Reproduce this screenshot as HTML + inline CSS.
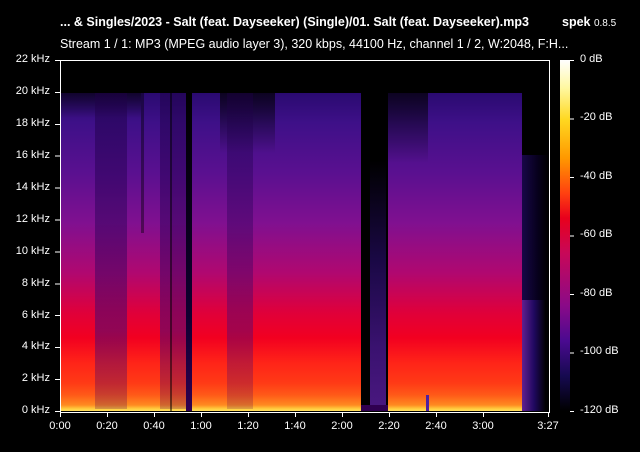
<!DOCTYPE html>
<html><head><meta charset="utf-8"><style>
body{margin:0;background:#000;width:640px;height:452px;overflow:hidden;position:relative;font-family:"Liberation Sans",sans-serif;color:#fff}
.a{position:absolute}
.t{font-size:11px;white-space:nowrap}
.yl{right:590px;font-size:11px;text-align:right}
.xl{font-size:11px;top:420px;transform:translateX(-50%)}
.spec{background:linear-gradient(to bottom,#2a0a70 0px,#3e1088 30px,#5a1090 80px,#801090 130px,#b00870 180px,#e0003a 220px,#f20020 245px,#ff2418 270px,#ff3a16 290px,#ff5a18 302px,#ff8a20 312px,#ffd040 316px,#ffe060 318px)}
.dk{background:linear-gradient(to bottom,rgba(30,0,70,.5),rgba(40,0,90,.45) 50%,rgba(70,10,120,.55) 75%,rgba(80,0,80,.25))}
</style></head><body>
<div class="a" style="left:60px;top:15px;font-size:12.5px;font-weight:bold">... &amp; Singles/2023 - Salt (feat. Dayseeker) (Single)/01. Salt (feat. Dayseeker).mp3</div>
<div class="a" style="left:562px;top:15px;font-size:12.5px;font-weight:bold">spek <span style="font-weight:normal;font-size:10px">0.8.5</span></div>
<div class="a" style="left:60px;top:37px;font-size:12.5px">Stream 1 / 1: MP3 (MPEG audio layer 3), 320 kbps, 44100 Hz, channel 1 / 2, W:2048, F:H...</div>

<div class="a spec" style="left:61px;top:93px;width:300px;height:318px"></div>
<div class="a spec" style="left:388px;top:93px;width:134px;height:318px"></div>
<div class="a" style="left:61px;top:93px;width:80px;height:25px;background:linear-gradient(rgba(0,0,0,.6),rgba(0,0,0,0))"></div>
<div class="a" style="left:220px;top:93px;width:55px;height:60px;background:linear-gradient(rgba(0,0,0,.7),rgba(0,0,0,0))"></div>
<div class="a" style="left:388px;top:93px;width:40px;height:70px;background:linear-gradient(rgba(0,0,0,.7),rgba(0,0,0,0))"></div>
<div class="a dk" style="left:95px;top:93px;width:32px;height:316px"></div>
<div class="a dk" style="left:160px;top:93px;width:32px;height:316px"></div>
<div class="a" style="left:186px;top:93px;width:6px;height:318px;background:linear-gradient(#000,#100030 70%,#300050)"></div>
<div class="a dk" style="left:227px;top:93px;width:26px;height:316px;opacity:.8"></div>
<div class="a" style="left:141px;top:93px;width:3px;height:140px;background:#000;opacity:.4"></div>
<div class="a" style="left:170px;top:93px;width:2px;height:318px;background:#000;opacity:.5"></div>
<div class="a" style="left:361px;top:93px;width:27px;height:318px;background:#000"></div>
<div class="a" style="left:370px;top:160px;width:16px;height:251px;background:linear-gradient(#000,#1a0845 40%,#3a1270 75%,#4a1880)"></div>
<div class="a" style="left:361px;top:405px;width:27px;height:6px;background:#300050"></div>
<div class="a" style="left:426px;top:395px;width:3px;height:16px;background:#5020a0"></div>
<div class="a" style="left:522px;top:155px;width:26px;height:256px;background:linear-gradient(to right,#1a0850,#080020 60%,#000);opacity:.9"></div>
<div class="a" style="left:522px;top:300px;width:24px;height:111px;background:linear-gradient(to right,#602090,#200860 50%,#000)"></div>

<div class="a" style="left:60px;top:60px;width:488px;height:351px;border:1px solid #fff"></div>
<div class="a" style="left:55px;top:60px;width:5px;height:352px;background:repeating-linear-gradient(to bottom,#fff 0,#fff 1px,transparent 1px,transparent 31.9px)"></div>
<div class="a yl" style="top:53px">22 kHz</div>
<div class="a yl" style="top:85px">20 kHz</div>
<div class="a yl" style="top:117px">18 kHz</div>
<div class="a yl" style="top:149px">16 kHz</div>
<div class="a yl" style="top:181px">14 kHz</div>
<div class="a yl" style="top:213px">12 kHz</div>
<div class="a yl" style="top:245px">10 kHz</div>
<div class="a yl" style="top:277px">8 kHz</div>
<div class="a yl" style="top:309px">6 kHz</div>
<div class="a yl" style="top:340px">4 kHz</div>
<div class="a yl" style="top:372px">2 kHz</div>
<div class="a yl" style="top:404px">0 kHz</div>
<div class="a" style="left:60px;top:412px;width:440px;height:5px;background:repeating-linear-gradient(to right,#fff 0,#fff 1px,transparent 1px,transparent 47px)"></div>
<div class="a" style="left:548px;top:412px;width:1px;height:5px;background:#fff"></div>
<div class="a xl" style="left:60px">0:00</div>
<div class="a xl" style="left:107px">0:20</div>
<div class="a xl" style="left:154px">0:40</div>
<div class="a xl" style="left:201px">1:00</div>
<div class="a xl" style="left:248px">1:20</div>
<div class="a xl" style="left:295px">1:40</div>
<div class="a xl" style="left:342px">2:00</div>
<div class="a xl" style="left:389px">2:20</div>
<div class="a xl" style="left:436px">2:40</div>
<div class="a xl" style="left:483px">3:00</div>
<div class="a xl" style="left:548px">3:27</div>
<div class="a" style="left:560px;top:60px;width:10px;height:351px;background:linear-gradient(to bottom,#fff 0%,#fff8a0 8%,#ffd820 17%,#ff9800 28%,#ff4010 38%,#e8001c 45%,#c80858 55%,#8a0a88 70%,#4a0a90 80%,#160a50 90%,#000 100%)"></div>
<div class="a" style="left:570px;top:60px;width:4px;height:352px;background:repeating-linear-gradient(to bottom,#fff 0,#fff 1px,transparent 1px,transparent 58.5px)"></div>
<div class="a t" style="left:580px;top:53px">0 dB</div>
<div class="a t" style="left:580px;top:111px">-20 dB</div>
<div class="a t" style="left:580px;top:170px">-40 dB</div>
<div class="a t" style="left:580px;top:228px">-60 dB</div>
<div class="a t" style="left:580px;top:287px">-80 dB</div>
<div class="a t" style="left:580px;top:345px">-100 dB</div>
<div class="a t" style="left:580px;top:404px">-120 dB</div>
</body></html>
